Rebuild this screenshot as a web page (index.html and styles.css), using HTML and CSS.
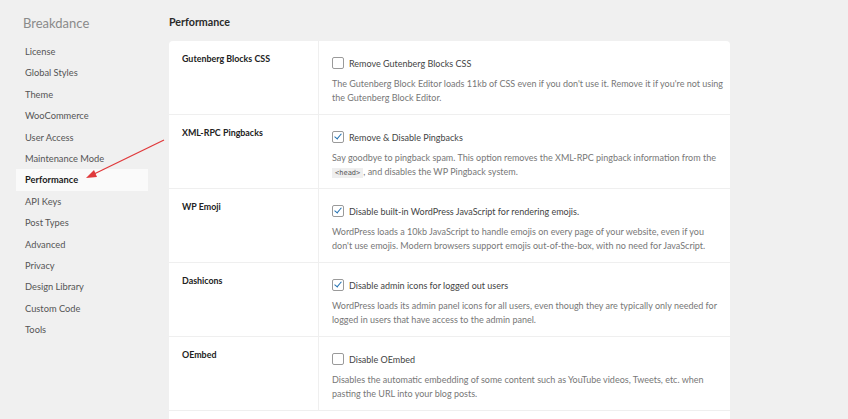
FILE: index.html
```html
<!DOCTYPE html>
<html lang="en">
<head>
  <meta charset="UTF-8">
  <title>Breakdance Settings - Performance</title>
  <link rel="stylesheet" href="styles.css">
</head>
<body>

<div class="page">
  <aside class="sidebar">
    <div class="brand">Breakdance</div>
    <nav class="menu">
      <a href="#">License</a>
      <a href="#">Global Styles</a>
      <a href="#">Theme</a>
      <a href="#">WooCommerce</a>
      <a href="#">User Access</a>
      <a href="#">Maintenance Mode</a>
      <a href="#" class="active">Performance</a>
      <a href="#">API Keys</a>
      <a href="#">Post Types</a>
      <a href="#">Advanced</a>
      <a href="#">Privacy</a>
      <a href="#">Design Library</a>
      <a href="#">Custom Code</a>
      <a href="#">Tools</a>
    </nav>
  </aside>

  <main class="content">
    <h1>Performance</h1>

    <div class="settings">
      <div class="row">
        <div class="label">Gutenberg Blocks CSS</div>
        <div class="field">
          <label class="check"><span class="box"></span>Remove Gutenberg Blocks CSS</label>
          <p>The Gutenberg Block Editor loads 11kb of CSS even if you don't use it. Remove it if you're not using the Gutenberg Block Editor.</p>
        </div>
      </div>

      <div class="row">
        <div class="label">XML-RPC Pingbacks</div>
        <div class="field">
          <label class="check"><span class="box checked"></span>Remove &amp; Disable Pingbacks</label>
          <p>Say goodbye to pingback spam. This option removes the XML-RPC pingback information from the <code>&lt;head&gt;</code>, and disables the WP Pingback system.</p>
        </div>
      </div>

      <div class="row">
        <div class="label">WP Emoji</div>
        <div class="field">
          <label class="check"><span class="box checked"></span>Disable built-in WordPress JavaScript for rendering emojis.</label>
          <p>WordPress loads a 10kb JavaScript to handle emojis on every page of your website, even if you don't use emojis. Modern browsers support emojis out-of-the-box, with no need for JavaScript.</p>
        </div>
      </div>

      <div class="row">
        <div class="label">Dashicons</div>
        <div class="field">
          <label class="check"><span class="box checked"></span>Disable admin icons for logged out users</label>
          <p>WordPress loads its admin panel icons for all users, even though they are typically only needed for logged in users that have access to the admin panel.</p>
        </div>
      </div>

      <div class="row">
        <div class="label">OEmbed</div>
        <div class="field">
          <label class="check"><span class="box"></span>Disable OEmbed</label>
          <p>Disables the automatic embedding of some content such as YouTube videos, Tweets, etc. when pasting the URL into your blog posts.</p>
        </div>
      </div>

      <div class="row short"></div>
    </div>
  </main>
</div>

<!-- annotation arrow pointing at the menu item -->
<svg class="arrow" width="848" height="419" viewBox="0 0 848 419">
  <line x1="164" y1="140" x2="92" y2="175" stroke="#e0393b" stroke-width="1.3"/>
  <polygon points="86,178 94,170 97,177" fill="#e0393b"/>
</svg>

</body>
</html>
```

FILE: styles.css
```css
body {
  margin: 0;
  background-color: #f0f0f0;
  font-family: Lato, "Open Sans", sans-serif;
  color: #1e1e1e;
  overflow: hidden;
}

.page {
  display: flex;
  height: 419px;
  overflow: hidden;
}

.sidebar {
  width: 169px;
  flex-shrink: 0;
}

.brand {
  padding: 15px 0 0 23px;
  height: 23px;
  font-size: 13px;
  color: #8a8a8a;
}

.menu {
  display: flex;
  flex-direction: column;
  padding: 3px 0 0 16px;
}

.menu a {
  width: 123px;
  height: 21.4px;
  line-height: 21.4px;
  padding-left: 9px;
  font-size: 9.3px;
  color: #555;
  text-decoration: none;
}

.menu a.active {
  background-color: #fafafa;
  color: #1a1a1a;
  font-weight: 700;
}

.content {
  width: 561px;
}

h1 {
  margin: 15px 0 0 0;
  height: 26px;
  font-size: 10.7px;
  font-weight: 700;
  color: #2a2a2a;
}

.settings {
  background-color: #fff;
  border-radius: 4px 4px 0 0;
}

.row {
  display: flex;
  height: 74px;
  border-bottom: 1px solid #efefef;
  box-sizing: border-box;
}

.row.short {
  height: 20px;
}

.label {
  width: 150px;
  flex-shrink: 0;
  box-sizing: border-box;
  padding: 12px 0 0 13px;
  border-right: 1px solid #efefef;
  font-size: 8.9px;
  font-weight: 700;
  color: #222;
}

.field {
  padding: 16px 0 0 13px;
}

.check {
  display: flex;
  align-items: center;
  font-size: 9px;
  color: #444;
}

.box {
  width: 10px;
  height: 10px;
  margin-right: 5px;
  border: 1px solid #9a9a9a;
  border-radius: 2px;
  position: relative;
}

.box.checked::after {
  content: "";
  position: absolute;
  left: 3px;
  top: 0;
  width: 3px;
  height: 6px;
  border: solid #2271b1;
  border-width: 0 1.6px 1.6px 0;
  transform: rotate(40deg);
}

.field p {
  margin: 8px 0 0 0;
  font-size: 9px;
  line-height: 14px;
  color: #777;
  width: 393px;
}

code {
  font-family: "DejaVu Sans Mono", monospace;
  font-size: 7px;
  background-color: #efefef;
  padding: 1px 3px;
  color: #555;
}

.arrow {
  position: absolute;
  left: 0;
  top: 0;
  pointer-events: none;
}
```
